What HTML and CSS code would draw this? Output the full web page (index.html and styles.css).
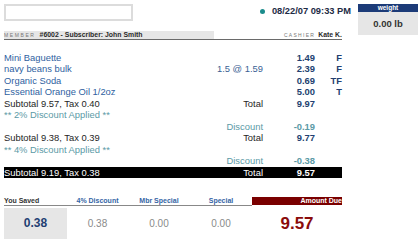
FILE: index.html
```html
<!DOCTYPE html>
<html>
<head>
<meta charset="utf-8">
<link rel="stylesheet" href="styles.css">
</head>
<body>
<div class="screen">
  <div class="main">
    <div class="top">
      <div class="search"></div>
      <span class="dot"></span>
      <span class="date">08/22/07 09:33 PM</span>
    </div>
    <div class="member-row">
      <div class="member"><span class="lbl">MEMBER</span><b>#6002 - Subscriber: John Smith</b></div>
      <div class="cashier"><span class="lbl">CASHIER</span><b>Kate K.</b></div>
    </div>
    <div class="items">
      <div class="row item"><span class="name">Mini Baguette</span><span class="mid"></span><span class="price">1.49</span><span class="flag">F</span></div>
      <div class="row item"><span class="name">navy beans bulk</span><span class="mid">1.5 @ 1.59</span><span class="price">2.39</span><span class="flag">F</span></div>
      <div class="row item"><span class="name">Organic Soda</span><span class="mid"></span><span class="price">0.69</span><span class="flag">TF</span></div>
      <div class="row item"><span class="name">Essential Orange Oil 1/2oz</span><span class="mid"></span><span class="price">5.00</span><span class="flag">T</span></div>
      <div class="row sub"><span class="name">Subtotal 9.57, Tax 0.40</span><span class="mid">Total</span><span class="price">9.97</span><span class="flag"></span></div>
      <div class="row disc"><span class="name">** 2% Discount Applied **</span><span class="mid"></span><span class="price"></span><span class="flag"></span></div>
      <div class="row disc"><span class="name"></span><span class="mid">Discount</span><span class="price">-0.19</span><span class="flag"></span></div>
      <div class="row sub"><span class="name">Subtotal 9.38, Tax 0.39</span><span class="mid">Total</span><span class="price">9.77</span><span class="flag"></span></div>
      <div class="row disc"><span class="name">** 4% Discount Applied **</span><span class="mid"></span><span class="price"></span><span class="flag"></span></div>
      <div class="row disc"><span class="name"></span><span class="mid">Discount</span><span class="price">-0.38</span><span class="flag"></span></div>
      <div class="row final"><span class="name">Subtotal 9.19, Tax 0.38</span><span class="mid">Total</span><span class="price">9.57</span><span class="flag"></span></div>
    </div>
    <div class="summary">
      <div class="hd saved-hd">You Saved</div>
      <div class="hd">4% Discount</div>
      <div class="hd">Mbr Special</div>
      <div class="hd">Special</div>
      <div class="hd due-hd">Amount Due</div>
      <div class="val saved">0.38</div>
      <div class="val">0.38</div>
      <div class="val">0.00</div>
      <div class="val">0.00</div>
      <div class="val due">9.57</div>
    </div>
  </div>
  <div class="weight">
    <div class="weight-hd">weight</div>
    <div class="weight-val">0.00 lb</div>
  </div>
</div>
</body>
</html>
```

FILE: styles.css
```css
* { box-sizing: border-box; }
html, body { margin: 0; padding: 0; background: #fff; }
body { font-family: "Liberation Sans", Arial, sans-serif; }

.screen {
  width: 420px;
  height: 252px;
  padding: 4px 2px 0 4px;
  display: flex;
  justify-content: space-between;
  align-items: flex-start;
}

.main { width: 338px; }

.top {
  display: flex;
  align-items: flex-start;
  height: 17px;
  margin-right: -9px;
}
.search {
  width: 129px;
  height: 17px;
  border: 2px solid #dcdcdc;
  background: #fff;
}
.dot {
  width: 5px;
  height: 5px;
  border-radius: 50%;
  background: #1b8c8c;
  margin: 5px 7px 0 auto;
}
.date {
  font-weight: bold;
  font-size: 9.3px;
  line-height: 14px;
  color: #1d2b45;
}

.member-row {
  margin-top: 10px;
  height: 9px;
  border-bottom: 1px solid #6a6a6a;
  display: flex;
  justify-content: space-between;
  font-size: 6.9px;
  line-height: 8px;
  color: #2a2a2a;
}
.member {
  width: 210px;
  height: 8px;
  background: #e6e6e6;
  white-space: nowrap;
}
.lbl {
  font-size: 5px;
  letter-spacing: 1.6px;
  color: #777;
  margin-right: 4px;
}
.cashier .lbl { letter-spacing: 1.3px; margin-right: 3px; }
.cashier { white-space: nowrap; }

.items {
  margin-top: 11.5px;
  font-size: 9.4px;
  line-height: 11.5px;
}
.row {
  display: grid;
  grid-template-columns: 1fr 60px 52px 27px;
  height: 11.5px;
  white-space: nowrap;
}
.mid, .price, .flag { text-align: right; }
.price { font-weight: bold; color: #233f70; }
.flag { font-weight: bold; color: #233f70; }
.item .name { color: #2f5f9f; }
.item .mid { color: #3a5f94; }
.sub .name, .sub .mid { color: #1e1e1e; }
.disc .name, .disc .mid { color: #5b9aa6; }
.disc .price { color: #5b9aa6; }
.final { background: #000; }
.final .name, .final .mid, .final .price { color: #fff; }

.summary {
  margin-top: 19px;
  display: grid;
  grid-template-columns: 63px 61px 62px 62px 90px;
  grid-template-rows: 9px 31px;
  row-gap: 2px;
}
.hd {
  font-size: 7px;
  font-weight: bold;
  line-height: 8px;
  color: #3565a5;
  text-align: center;
  border-bottom: 1px solid #888;
  white-space: nowrap;
}
.saved-hd { text-align: left; color: #333; }
.due-hd {
  background: #7a0000;
  color: #fff;
  text-align: right;
  border-bottom: none;
  height: 8px;
}
.val {
  font-size: 10px;
  line-height: 31px;
  text-align: center;
  color: #8a8a8a;
}
.val.saved {
  background: #e6e6e6;
  font-size: 12px;
  font-weight: bold;
  color: #1f3f73;
}
.val.due {
  font-size: 17px;
  font-weight: bold;
  color: #8a0b0b;
}

.weight {
  width: 60px;
  background: #e6e6e6;
}
.weight-hd {
  height: 8px;
  background: #1c3b78;
  color: #fff;
  font-size: 6.5px;
  font-weight: bold;
  line-height: 8px;
  text-align: center;
}
.weight-val {
  height: 23px;
  font-size: 9.5px;
  font-weight: bold;
  line-height: 23px;
  text-align: center;
  color: #333;
}
```
